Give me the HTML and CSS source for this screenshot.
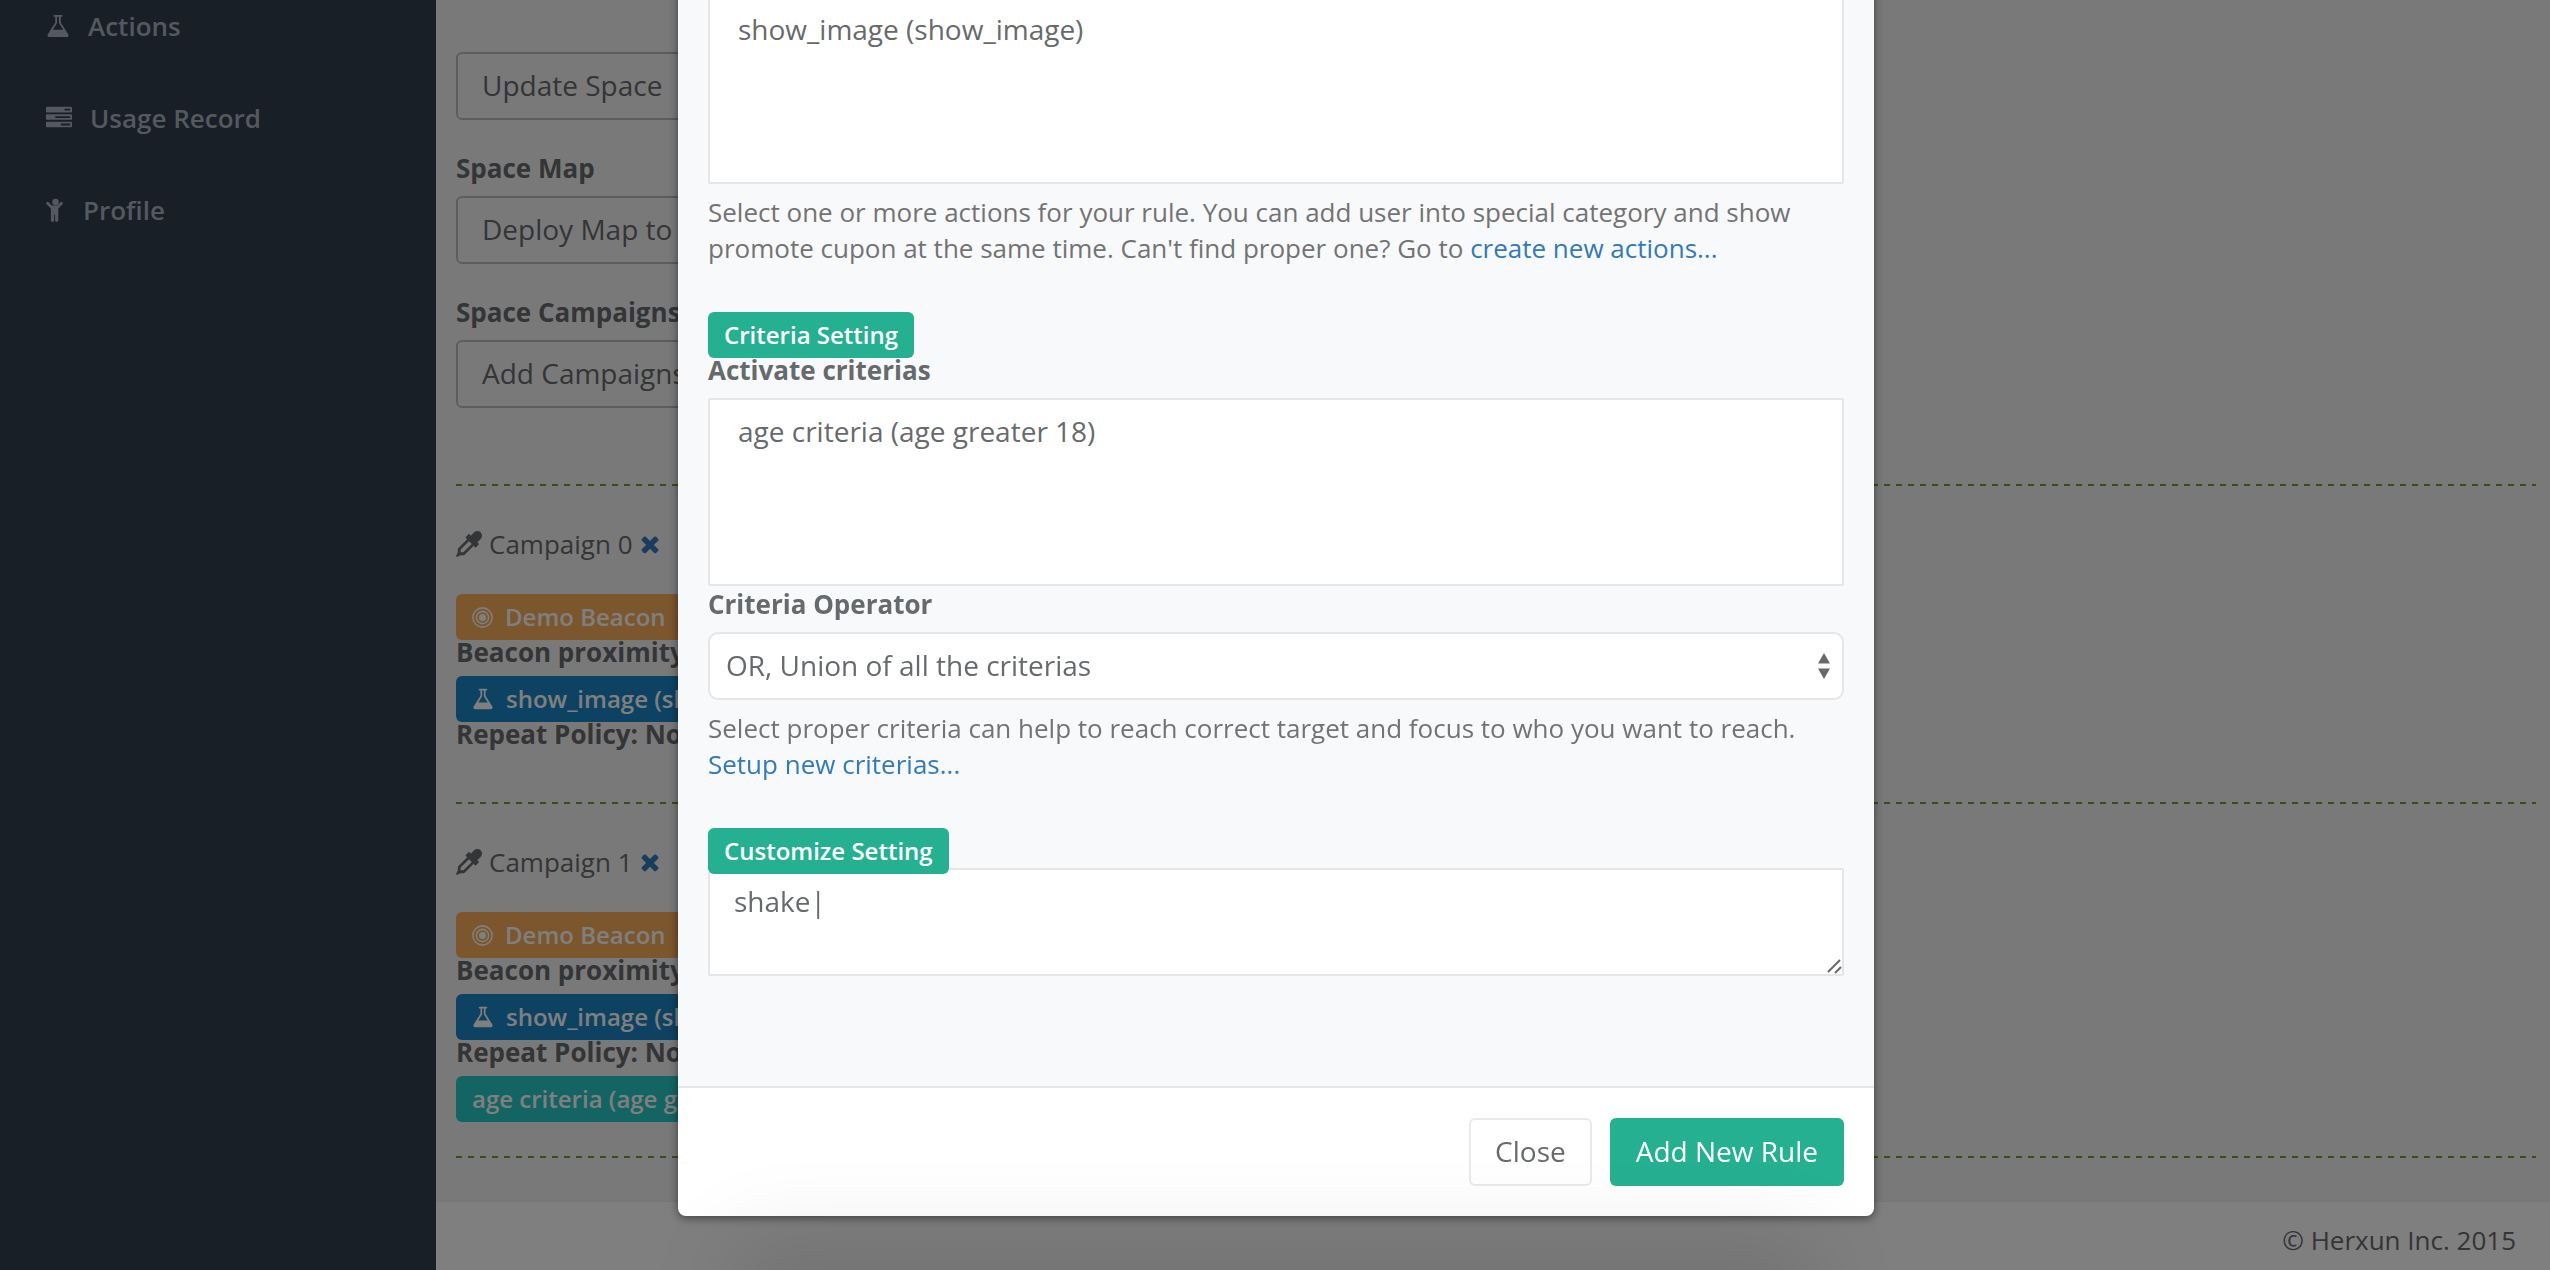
FILE: index.html
```html
<!DOCTYPE html>
<html lang="en">
<head>
<meta charset="utf-8">
<meta name="viewport" content="width=device-width, initial-scale=1">
<title>Space - Add New Rule</title>
<link rel="stylesheet" href="styles.css">
</head>
<body>
<svg class="sprite" aria-hidden="true">
  <symbol id="flask" viewBox="64 0 1664 1792"><path d="M1591 1448q56 89 21.5 152.5t-140.500 63.500h-1152q-106 0-140.500-63.500t21.500-152.500l503-793v-399h-64q-26 0-45-19t-19-45 19-45 45-19h512q26 0 45 19t19 45-19 45-45 19h-64v399zm-779-725l-272 429h712l-272-429-20-31v-436h-128v436z"/></symbol>
  <symbol id="tasks" viewBox="0 0 1792 1792"><path d="M1024 1408h640v-128h-640v128zm-384-512h1024v-128h-1024v128zm640-512h384v-128h-384v128zm512 832v256q0 26-19 45t-45 19h-1664q-26 0-45-19t-19-45v-256q0-26 19-45t45-19h1664q26 0 45 19t19 45zm0-512v256q0 26-19 45t-45 19h-1664q-26 0-45-19t-19-45v-256q0-26 19-45t45-19h1664q26 0 45 19t19 45zm0-512v256q0 26-19 45t-45 19h-1664q-26 0-45-19t-19-45v-256q0-26 19-45t45-19h1664q26 0 45 19t19 45z"/></symbol>
  <symbol id="child" viewBox="276 0 1241 1792"><path d="M1381 493l-292 292v824q0 46-33 79t-79 33-79-33-33-79v-384h-64v384q0 46-33 79t-79 33-79-33-33-79v-824l-292-292q-28-28-28-68t28-68q29-28 68.500-28t67.500 28l228 228h368l228-228q28-28 68-28t68 28q28 29 28 68.500t-28 67.500z"/><circle cx="896" cy="352" r="224"/></symbol>
  <symbol id="dropper" viewBox="0 0 1792 1792"><path fill-rule="evenodd" d="M1698 94q94 94 94 226.500t-94 225.500l-225 223 104 104q10 10 10 23t-10 23l-210 210q-10 10-23 10t-23-10l-105-105-603 603q-37 37-90 37h-203l-256 128-64-64 128-256v-203q0-53 37-90l603-603-105-105q-10-10-10-23t10-23l210-210q10-10 23-10t23 10l104 104 223-225q93-94 225.500-94t226.500 94zM512 1472l576-576-192-192-576 576v192z"/></symbol>
  <symbol id="times" viewBox="192 0 1408 1792"><path d="M1490 1322q0 40-28 68l-136 136q-28 28-68 28t-68-28l-294-294-294 294q-28 28-68 28t-68-28l-136-136q-28-28-28-68t28-68l294-294-294-294q-28-28-28-68t28-68l136-136q28-28 68-28t68 28l294 294 294-294q28-28 68-28t68 28l136 136q28 28 28 68t-28 68l-294 294 294 294q28 28 28 68z"/></symbol>
  <symbol id="bullseye" viewBox="0 0 1536 1536"><circle cx="768" cy="768" r="256"/><g fill="none" stroke="currentColor" stroke-width="110"><circle cx="768" cy="768" r="448"/><circle cx="768" cy="768" r="704"/></g></symbol>
</svg>

<div class="wrapper">
  <nav class="sidebar" aria-label="Main">
    <ul class="menu">
      <li><a href="#actions"><svg class="icon icon-flask"><use href="#flask"/></svg>Actions</a></li>
      <li><a href="#usage"><svg class="icon icon-tasks"><use href="#tasks"/></svg>Usage Record</a></li>
      <li><a href="#profile"><svg class="icon icon-child"><use href="#child"/></svg>Profile</a></li>
    </ul>
  </nav>

  <div class="page">
    <main class="content">
      <section class="field"><button class="btn btn-outline" type="button">Update Space</button></section>
      <section class="field">
        <h2 class="label">Space Map</h2>
        <button class="btn btn-outline" type="button">Deploy Map to</button>
      </section>
      <section class="field">
        <h2 class="label">Space Campaigns</h2>
        <button class="btn btn-outline" type="button">Add Campaigns</button>
      </section>

      <section class="campaign">
        <h3 class="campaign-title"><svg class="icon icon-dropper"><use href="#dropper"/></svg>Campaign 0<a class="remove" href="#remove-0" aria-label="Remove campaign 0"><svg class="icon icon-times"><use href="#times"/></svg></a></h3>
        <span class="badge badge-warning"><svg class="icon icon-badge"><use href="#bullseye"/></svg>Demo Beacon</span>
        <p class="rule">Beacon proximity</p>
        <span class="badge badge-info"><svg class="icon icon-badge-flask"><use href="#flask"/></svg>show_image (show_image)</span>
        <p class="rule">Repeat Policy: None</p>
      </section>

      <section class="campaign">
        <h3 class="campaign-title"><svg class="icon icon-dropper"><use href="#dropper"/></svg>Campaign 1<a class="remove" href="#remove-1" aria-label="Remove campaign 1"><svg class="icon icon-times"><use href="#times"/></svg></a></h3>
        <span class="badge badge-warning"><svg class="icon icon-badge"><use href="#bullseye"/></svg>Demo Beacon</span>
        <p class="rule">Beacon proximity</p>
        <span class="badge badge-info"><svg class="icon icon-badge-flask"><use href="#flask"/></svg>show_image (show_image)</span>
        <p class="rule">Repeat Policy: None</p>
        <span class="badge badge-teal">age criteria (age greater 18)</span>
      </section>
      <hr class="divider">
    </main>
    <footer class="page-footer">© Herxun Inc. 2015</footer>
  </div>
</div>

<div class="backdrop">
  <form class="modal" role="dialog" aria-label="Add New Rule">
    <div class="modal-body">
      <select class="control listbox" multiple aria-label="Actions">
        <option>show_image (show_image)</option>
      </select>
      <p class="help">Select one or more actions for your rule. You can add user into special category and show promote cupon at the same time. Can't find proper one? Go to <a href="#new-action">create new actions...</a></p>

      <span class="badge badge-primary badge-heading">Criteria Setting</span>
      <label class="label" for="criterias">Activate criterias</label>
      <select class="control listbox" id="criterias" multiple>
        <option>age criteria (age greater 18)</option>
      </select>
      <label class="label" for="operator">Criteria Operator</label>
      <div class="select-wrap">
        <select class="control dropdown" id="operator">
          <option>OR, Union of all the criterias</option>
        </select>
        <svg class="arrows" viewBox="0 0 12 26" aria-hidden="true"><path d="M0 10.500 6 0l6 10.500zM0 15.500h12L6 26z"/></svg>
      </div>
      <p class="help">Select proper criteria can help to reach correct target and focus to who you want to reach. <a href="#new-criteria">Setup new criterias...</a></p>

      <label class="badge badge-primary badge-heading" for="custom">Customize Setting</label>
      <div class="area-wrap">
        <textarea class="control area" id="custom">shake|</textarea>
        <svg class="grip" viewBox="0 0 16 16" aria-hidden="true"><path d="M2 14 14 2M9 15l6-6"/></svg>
      </div>
    </div>
    <div class="modal-footer">
      <button class="btn btn-white" type="button">Close</button>
      <button class="btn btn-primary" type="submit">Add New Rule</button>
    </div>
  </form>
</div>
</body>
</html>
```

FILE: styles.css
```css
* { box-sizing: border-box; }

body {
  margin: 0;
  overflow: hidden;
  background: #313e4c;
  color: #676a6c;
  font: 26px/36px "Open Sans", "Noto Sans", sans-serif;
}

h2, h3, p, ul { margin: 0; padding: 0; font-size: inherit; }
a { color: #337ab7; text-decoration: none; }
button, select, textarea { font: inherit; color: inherit; }

.sprite { position: absolute; width: 0; height: 0; }
.icon { flex: none; fill: currentColor; height: 26px; }
.icon-flask { width: 24px; }
.icon-tasks { width: 26px; }
.icon-child { width: 19px; }
.icon-dropper { width: 26px; }
.icon-times { display: block; width: 20px; }
.icon-badge { width: 21px; height: 21px; }
.icon-badge-flask { width: 22px; height: 24px; }

.wrapper { display: flex; min-height: 100vh; }

/* Sidebar */
.sidebar { flex: none; width: 436px; padding-top: 8px; }
.menu { display: grid; gap: 56px; list-style: none; }
.menu a {
  display: flex;
  align-items: center;
  gap: 18px;
  padding: 0 40px 0 46px;
  color: #a7b1c2;
  font-weight: 600;
}

/* Page */
.page { flex: 1; display: flex; flex-direction: column; background: #f3f3f4; }
.content { flex: 1; padding: 52px 14px 0 20px; }
.field { margin-bottom: 30px; }
.label { display: block; margin-bottom: 10px; font-weight: 700; }

.btn {
  height: 68px;
  padding: 0 24px 2px;
  border: 2px solid transparent;
  border-radius: 6px;
  font-size: 28px;
  line-height: 40px;
}
.btn-outline { background: transparent; border-color: #bababa; }
.btn-white { background: #fff; border-color: #e7eaec; }
.btn-primary { background: #26b092; color: #fff; }

.divider, .campaign::before {
  content: "";
  display: block;
  height: 2px;
  margin: 0;
  border: 0;
  background: repeating-linear-gradient(90deg, #68a030 0 6px, transparent 6px 12px);
}
.campaign { padding-bottom: 34px; }
.field + .campaign { margin-top: 76px; }
.campaign-title {
  display: flex;
  align-items: center;
  gap: 7px;
  margin: 40px 0 32px;
  font-weight: 400;
}
.rule { margin: -6px 0 6px; font-weight: 700; }
.rule:last-child { margin-bottom: 16px; }

.badge {
  display: flex;
  align-items: center;
  gap: 12px;
  width: max-content;
  height: 46px;
  padding: 0 16px;
  border-radius: 6px;
  color: #fff;
  font-size: 24px;
  font-weight: 600;
}
.badge-warning { background: #f8ac59; }
.badge-info { background: #1c84c6; }
.badge-teal { background: #28c8c8; }
.badge-primary { background: #26b092; }
.badge-heading { position: relative; z-index: 1; margin: 46px 0 -6px; }

.page-footer {
  margin-top: 42px;
  padding: 20px 34px 12px;
  border-top: 2px solid #efefef;
  background: #fff;
  text-align: right;
}

/* Modal */
.backdrop {
  position: fixed;
  inset: 0;
  overflow: hidden;
  padding-left: 2px;
  background: rgba(0, 0, 0, .5);
}
.backdrop::after {
  content: "";
  position: absolute;
  inset: 100% 30% auto;
  height: 100px;
  box-shadow: 0 0 90px 30px rgba(0, 0, 0, .1);
}
.modal {
  max-width: 1196px;
  margin: -34px auto 0;
  border-radius: 8px;
  background: #fff;
  box-shadow: 0 2px 10px rgba(0, 0, 0, .5);
}
.modal-body { padding: 30px 30px 110px; background: #f8f9fb; }
.modal-footer {
  display: flex;
  justify-content: flex-end;
  gap: 18px;
  padding: 30px;
  border-top: 2px solid #e5e5e5;
}

.control {
  display: block;
  width: 100%;
  border: 2px solid #e5e6e7;
  border-radius: 2px;
  outline: 0;
  background: #fff;
  font-size: 28px;
  line-height: 40px;
}
.listbox { height: 188px; padding: 12px 24px; overflow: hidden; }
.listbox option { padding: 0 4px; }
.select-wrap, .area-wrap { position: relative; }
.dropdown { height: 68px; padding: 0 16px 2px; border-radius: 10px; appearance: none; }
.arrows { position: absolute; top: 21px; right: 14px; width: 12px; height: 26px; fill: #676a6c; }
.area { height: 108px; padding: 11px 24px; resize: none; }
.grip { position: absolute; right: 2px; bottom: 2px; width: 16px; height: 16px; fill: none; stroke: #676a6c; stroke-width: 2; }
.help { margin-top: 10px; color: #737373; }
```
